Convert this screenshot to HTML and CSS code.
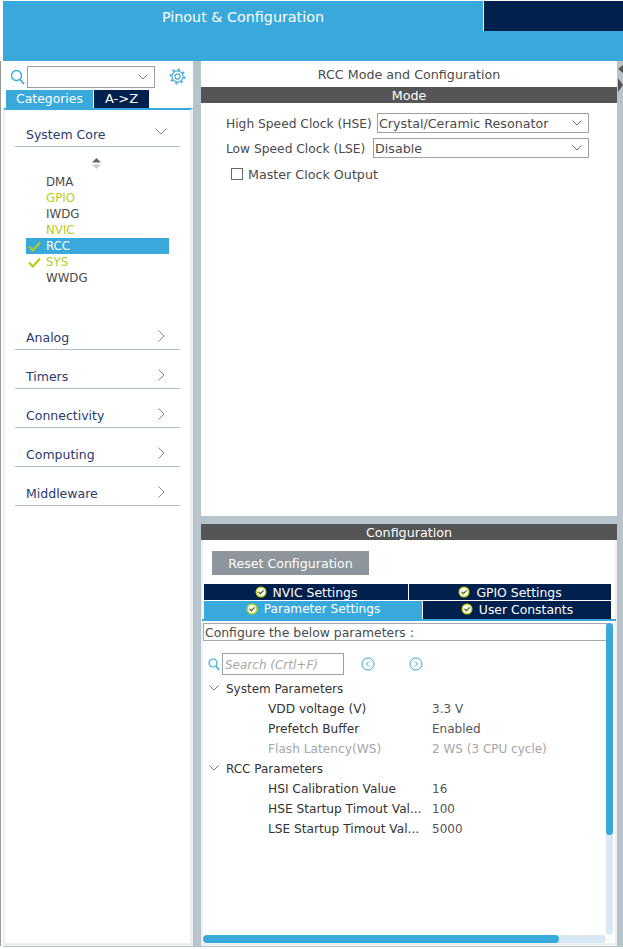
FILE: index.html
```html
<!DOCTYPE html>
<html lang="en">
<head>
  <meta charset="UTF-8">
  <title>Pinout &amp; Configuration</title>
  <link rel="stylesheet" href="styles.css">
</head>
<body>
  <div class="app">
    <header class="topbar">
      <div class="topbar-title">Pinout &amp; Configuration</div>
      <div class="topbar-tab"></div>
    </header>
    <div class="workspace">
      <aside class="sidebar">
        <div class="search-row">
          <svg class="search-icon" width="15" height="16" viewBox="0 0 15 16"><circle cx="6.5" cy="6.5" r="5" fill="none" stroke="#39a9dc" stroke-width="1.4"/><path d="M10 10.5l4 4.5" stroke="#39a9dc" stroke-width="1.6" fill="none"/></svg>
          <div class="search-combo">
            <svg width="10" height="6" viewBox="0 0 10 6"><path d="M.5.5L5 5 9.5.5" stroke="#777" fill="none"/></svg>
          </div>
          <svg class="gear" width="17" height="17" viewBox="0 0 17 17"><circle cx="8.5" cy="8.5" r="2.6" fill="none" stroke="#39a9dc" stroke-width="1.1"/><circle cx="8.5" cy="8.5" r="5.6" fill="none" stroke="#39a9dc" stroke-width="1.1"/><circle cx="8.5" cy="8.5" r="7" fill="none" stroke="#39a9dc" stroke-width="1.8" stroke-dasharray="2.2 3.3"/></svg>
        </div>
        <div class="side-tabs">
          <div class="side-tab side-tab-on">Categories</div>
          <div class="side-tab side-tab-az">A-&gt;Z</div>
        </div>
        <div class="categories">
          <div class="cat cat-open">
            <span>System Core</span>
            <svg width="12" height="7" viewBox="0 0 12 7"><path d="M.5.5L6 6 11.5.5" stroke="#888" fill="none"/></svg>
          </div>
          <div class="sort-arrows">
            <svg width="9" height="11" viewBox="0 0 9 11"><path d="M4.5 0L9 4.5H0z" fill="#666"/><path d="M0 6.5h9L4.5 11z" fill="#ccc"/></svg>
          </div>
          <ul class="periph">
            <li>DMA</li>
            <li class="lime">GPIO</li>
            <li>IWDG</li>
            <li class="lime">NVIC</li>
            <li class="sel">
              <svg class="tick" width="13" height="11" viewBox="0 0 13 11"><path d="M1 5.5L4.8 9.5 12 1.5" stroke="#b5cc18" stroke-width="2.2" fill="none"/></svg>
              RCC
            </li>
            <li class="lime">
              <svg class="tick" width="13" height="11" viewBox="0 0 13 11"><path d="M1 5.5L4.8 9.5 12 1.5" stroke="#b5cc18" stroke-width="2.2" fill="none"/></svg>
              SYS
            </li>
            <li>WWDG</li>
          </ul>
          <div class="cat cat-first"><span>Analog</span><svg width="7" height="12" viewBox="0 0 7 12"><path d="M.5.5L6 6 .5 11.5" stroke="#888" fill="none"/></svg></div>
          <div class="cat"><span>Timers</span><svg width="7" height="12" viewBox="0 0 7 12"><path d="M.5.5L6 6 .5 11.5" stroke="#888" fill="none"/></svg></div>
          <div class="cat"><span>Connectivity</span><svg width="7" height="12" viewBox="0 0 7 12"><path d="M.5.5L6 6 .5 11.5" stroke="#888" fill="none"/></svg></div>
          <div class="cat"><span>Computing</span><svg width="7" height="12" viewBox="0 0 7 12"><path d="M.5.5L6 6 .5 11.5" stroke="#888" fill="none"/></svg></div>
          <div class="cat"><span>Middleware</span><svg width="7" height="12" viewBox="0 0 7 12"><path d="M.5.5L6 6 .5 11.5" stroke="#888" fill="none"/></svg></div>
        </div>
      </aside>

      <main class="main">
        <section class="mode-panel">
          <div class="panel-title">RCC Mode and Configuration</div>
          <div class="bar">Mode</div>
          <div class="mode-row mode-row-first">
            <label>High Speed Clock (HSE)</label>
            <div class="select select-hse">Crystal/Ceramic Resonator
              <svg width="10" height="6" viewBox="0 0 10 6"><path d="M.5.5L5 5 9.5.5" stroke="#666" fill="none"/></svg>
            </div>
          </div>
          <div class="mode-row">
            <label>Low Speed Clock (LSE)</label>
            <div class="select select-lse">Disable
              <svg width="10" height="6" viewBox="0 0 10 6"><path d="M.5.5L5 5 9.5.5" stroke="#666" fill="none"/></svg>
            </div>
          </div>
          <div class="check-row">
            <span class="checkbox"></span>
            <span>Master Clock Output</span>
          </div>
        </section>

        <section class="config-panel">
          <div class="bar">Configuration</div>
          <button class="reset-btn">Reset Configuration</button>
          <div class="tabs tabs-top">
            <div class="tab">
              <svg class="ok" width="12" height="12" viewBox="0 0 12 12"><circle cx="6" cy="6" r="5.5" fill="#c5d521"/><circle cx="6" cy="6" r="4" fill="#fff"/><path d="M3.5 5.8L5.4 7.7 8.6 4.4" stroke="#5a6a20" stroke-width="1.3" fill="none"/></svg>
              NVIC Settings
            </div>
            <div class="tab">
              <svg class="ok" width="12" height="12" viewBox="0 0 12 12"><circle cx="6" cy="6" r="5.5" fill="#c5d521"/><circle cx="6" cy="6" r="4" fill="#fff"/><path d="M3.5 5.8L5.4 7.7 8.6 4.4" stroke="#5a6a20" stroke-width="1.3" fill="none"/></svg>
              GPIO Settings
            </div>
          </div>
          <div class="tabs tabs-bottom">
            <div class="tab tab-on">
              <svg class="ok" width="12" height="12" viewBox="0 0 12 12"><circle cx="6" cy="6" r="5.5" fill="#c5d521"/><circle cx="6" cy="6" r="4" fill="#fff"/><path d="M3.5 5.8L5.4 7.7 8.6 4.4" stroke="#5a6a20" stroke-width="1.3" fill="none"/></svg>
              Parameter Settings
            </div>
            <div class="tab">
              <svg class="ok" width="12" height="12" viewBox="0 0 12 12"><circle cx="6" cy="6" r="5.5" fill="#c5d521"/><circle cx="6" cy="6" r="4" fill="#fff"/><path d="M3.5 5.8L5.4 7.7 8.6 4.4" stroke="#5a6a20" stroke-width="1.3" fill="none"/></svg>
              User Constants
            </div>
          </div>
          <div class="tab-line"></div>
          <div class="hint">Configure the below parameters :</div>
          <div class="find-row">
            <svg width="12" height="13" viewBox="0 0 12 13"><circle cx="5" cy="5" r="4" fill="none" stroke="#39a9dc" stroke-width="1.2"/><path d="M8 8.2l3.2 3.8" stroke="#39a9dc" stroke-width="1.4" fill="none"/></svg>
            <div class="find-input">Search (Crtl+F)</div>
            <svg class="nav-first" width="14" height="14" viewBox="0 0 14 14"><circle cx="7" cy="7" r="6" fill="none" stroke="#39a9dc"/><path d="M8 4.5L5.5 7 8 9.5" stroke="#39a9dc" fill="none"/></svg>
            <svg class="nav-next" width="14" height="14" viewBox="0 0 14 14"><circle cx="7" cy="7" r="6" fill="none" stroke="#39a9dc"/><path d="M6 4.5L8.5 7 6 9.5" stroke="#39a9dc" fill="none"/></svg>
          </div>
          <div class="tree">
            <div class="group">
              <svg width="10" height="6" viewBox="0 0 10 6"><path d="M.5.5L5 5 9.5.5" stroke="#777" fill="none"/></svg>
              System Parameters
            </div>
            <div class="param"><span>VDD voltage (V)</span><span class="val">3.3 V</span></div>
            <div class="param"><span>Prefetch Buffer</span><span class="val">Enabled</span></div>
            <div class="param param-off"><span>Flash Latency(WS)</span><span class="val">2 WS (3 CPU cycle)</span></div>
            <div class="group">
              <svg width="10" height="6" viewBox="0 0 10 6"><path d="M.5.5L5 5 9.5.5" stroke="#777" fill="none"/></svg>
              RCC Parameters
            </div>
            <div class="param"><span>HSI Calibration Value</span><span class="val">16</span></div>
            <div class="param"><span>HSE Startup Timout Val...</span><span class="val">100</span></div>
            <div class="param"><span>LSE Startup Timout Val...</span><span class="val">5000</span></div>
          </div>
          <div class="vscroll"><div class="vthumb"></div></div>
          <div class="hscroll"><div class="hthumb"></div></div>
        </section>
      </main>

      <svg class="collapse-arrows" width="5" height="28" viewBox="0 0 5 28"><path d="M5 0L0 4l5 4z" fill="#555"/><path d="M0 13l5 7-5 7z" fill="#555"/></svg>
    </div>
  </div>
</body>
</html>
```

FILE: styles.css
```css
* {
  box-sizing: border-box;
}
html, body {
  margin: 0;
  height: 100%;
  overflow: hidden;
}
body {
  font-family: "DejaVu Sans", sans-serif;
  font-size: 12px;
  color: #4a4a4a;
  background-color: #fff;
}
.app {
  width: 623px;
  height: 949px;
  padding: 1px 0 2px 3px;
  display: flex;
  flex-direction: column;
  background-color: #fff;
}

/* top band */
.topbar {
  height: 60px;
  flex: none;
  display: flex;
  align-items: flex-start;
  background-color: #39a9dc;
}
.topbar-title {
  width: 480px;
  height: 30px;
  line-height: 33px;
  text-align: center;
  color: #fff;
  font-size: 14.3px;
}
.topbar-tab {
  flex: 1;
  height: 30px;
  border-left: 1px solid #fff;
  background-color: #00204e;
}

.workspace {
  position: relative;
  flex: 1;
  display: flex;
  align-items: flex-start;
  min-height: 0;
  background-color: #b8c4cc;
}
.workspace::before {
  content: "";
  position: absolute;
  left: -3px;
  top: 0;
  bottom: 1px;
  width: 1px;
  background-color: #999;
}
.collapse-arrows {
  position: absolute;
  right: 0;
  top: 4px;
}

/* left column */
.sidebar {
  width: 190px;
  height: 885px;
  flex: none;
  background-color: #fff;
}
.search-row {
  height: 29px;
  padding: 2px 0 0 7px;
  display: flex;
  align-items: center;
}
.search-combo {
  width: 128px;
  height: 22px;
  margin-left: 2px;
  padding-right: 6px;
  display: flex;
  align-items: center;
  justify-content: flex-end;
  border: 1px solid #9a9fa3;
}
.gear {
  margin-left: 14px;
}
.side-tabs {
  height: 18px;
  padding-left: 3px;
  display: flex;
  gap: 1px;
}
.side-tab {
  line-height: 18px;
  text-align: center;
  color: #fff;
  background-color: #00204e;
}
.side-tab-on {
  width: 87px;
  font-size: 12.4px;
  background-color: #39a9dc;
}
.side-tab-az {
  width: 55px;
  font-size: 13px;
}
.categories {
  height: 838px;
  padding: 12px 0 0 10px;
  border-top: 2px solid #39a9dc;
  border-left: 2px solid #eceef1;
  border-right: 3px solid #eceef1;
  border-bottom: 3px solid #eceef1;
}
.cat {
  width: 165px;
  height: 25px;
  margin-top: 14px;
  padding: 0 15px 0 11px;
  display: flex;
  align-items: center;
  justify-content: space-between;
  color: #2a3a6e;
  font-size: 12.5px;
  border-bottom: 1px solid #b0bac2;
}
.cat svg {
  margin-top: -3px;
}
.cat-open {
  margin-top: 0;
  padding-right: 13px;
}
.cat-open svg {
  margin-top: -5px;
}
.cat-first {
  margin-top: 39px;
}
.sort-arrows {
  height: 11px;
  margin-top: 11px;
  padding-left: 77px;
  display: flex;
}
.periph {
  list-style: none;
  margin: 5px 0 0;
  padding: 0 0 0 11px;
  width: 154px;
  font-size: 11.8px;
}
.periph li {
  position: relative;
  height: 16px;
  line-height: 16px;
  padding-left: 20px;
}
.periph .lime {
  color: #b5cc18;
}
.periph .sel {
  color: #fff;
  background-color: #39a9dc;
}
.tick {
  position: absolute;
  left: 2px;
  top: 3px;
}

/* right column */
.main {
  width: 416px;
  height: 885px;
  flex: none;
  margin-left: 8px;
  display: flex;
  flex-direction: column;
  gap: 8px;
}
.mode-panel {
  height: 455px;
  flex: none;
  background-color: #fff;
}
.panel-title {
  height: 26px;
  padding-top: 6px;
  text-align: center;
  line-height: 16px;
  font-size: 12.7px;
}
.bar {
  height: 16px;
  line-height: 18px;
  text-align: center;
  color: #fff;
  font-size: 12.7px;
  background-color: #545554;
}
.mode-row {
  height: 20px;
  margin-top: 5px;
  padding: 0 28px 0 25px;
  display: flex;
  align-items: center;
  justify-content: space-between;
}
.mode-row label {
  padding-top: 2px;
  font-size: 12.25px;
}
.mode-row-first {
  margin-top: 10px;
}
.select {
  height: 20px;
  padding: 0 6px 0 1px;
  display: flex;
  align-items: center;
  justify-content: space-between;
  font-size: 12.7px;
  border: 1px solid #9aa2a8;
}
.select-hse {
  width: 212px;
}
.select-lse {
  width: 216px;
}
.check-row {
  margin: 6px 0 0 30px;
  height: 20px;
  display: flex;
  align-items: center;
  gap: 5px;
  font-size: 12.7px;
}
.checkbox {
  width: 12px;
  height: 12px;
  border: 1px solid #666;
}

.config-panel {
  position: relative;
  flex: 1;
  background-color: #fff;
  box-shadow: inset 2px 0 0 #eef0f2, inset -2px 0 0 #eef0f2, inset 0 -3px 0 #eef0f2;
}
.reset-btn {
  display: block;
  width: 157px;
  height: 24px;
  margin: 11px 0 9px 11px;
  padding: 0;
  border: none;
  color: #fff;
  font-family: inherit;
  font-size: 12.6px;
  background-color: #8e959c;
}
.tabs {
  margin-left: 3px;
  width: 407px;
  display: grid;
  gap: 1px;
  font-size: 12.4px;
}
.tabs-top {
  height: 16px;
  grid-template-columns: 204px 202px;
}
.tabs-bottom {
  height: 18px;
  margin-top: 1px;
  grid-template-columns: 218px 188px;
}
.tabs-bottom .tab {
  padding-bottom: 2px;
}
.tab {
  display: flex;
  align-items: center;
  justify-content: center;
  gap: 6px;
  color: #fff;
  background-color: #00204e;
}
.tab-on {
  font-size: 12.1px;
  background-color: #39a9dc;
}
.tab-line {
  height: 2px;
  margin: 0 1px;
  background-color: #39a9dc;
}
.hint {
  width: 405px;
  height: 18px;
  margin: 2px 0 0 2px;
  padding: 1px 0 0 1px;
  line-height: 16px;
  font-size: 12.4px;
  border: 1px solid #a4aaaf;
  border-right: 0;
  white-space: nowrap;
}
.find-row {
  height: 22px;
  margin-top: 12px;
  padding-left: 7px;
  display: flex;
  align-items: center;
}
.find-input {
  width: 122px;
  height: 22px;
  margin-left: 2px;
  padding-left: 2px;
  line-height: 22px;
  color: #a8a8a8;
  font-style: italic;
  border: 1px solid #9aa2a8;
}
.nav-first {
  margin-left: 17px;
}
.nav-next {
  margin-left: 34px;
}
.tree {
  margin-top: 3px;
}
.group {
  height: 20px;
  padding: 2px 0 0 8px;
  display: flex;
  align-items: center;
  gap: 7px;
  color: #333;
}
.group svg {
  margin-top: -2px;
}
.param {
  height: 20px;
  padding: 2px 0 0 67px;
  display: flex;
  align-items: center;
  color: #333;
}
.param span:first-child {
  width: 164px;
  flex: none;
  white-space: nowrap;
  font-size: 12.2px;
}
.param .val {
  color: #555;
}
.param-off span,
.param-off .val {
  color: #a6a6a6;
}

/* scrollbars sit over the panel */
.vscroll {
  position: absolute;
  right: 4px;
  top: 99px;
  width: 7px;
  height: 312px;
  border-radius: 4px;
  background-color: #d9e8f5;
}
.vthumb {
  height: 212px;
  border-radius: 4px;
  background-color: #39a9dc;
}
.hscroll {
  position: absolute;
  left: 2px;
  bottom: 3px;
  width: 403px;
  height: 8px;
  border-radius: 4px;
  background-color: #d9e8f5;
}
.hthumb {
  width: 356px;
  height: 8px;
  border-radius: 4px;
  background-color: #39a9dc;
}
```
